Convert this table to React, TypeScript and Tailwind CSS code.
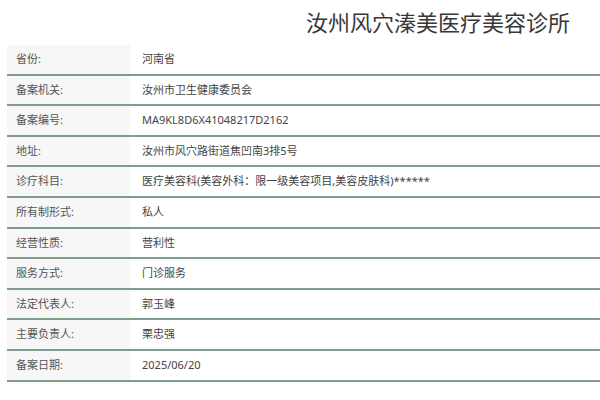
import React from "react";

const rows: [string, string][] = [
  ["省份:", "河南省"],
  ["备案机关:", "汝州市卫生健康委员会"],
  ["备案编号:", "MA9KL8D6X41048217D2162"],
  ["地址:", "汝州市风穴路街道焦凹南3排5号"],
  ["诊疗科目:", "医疗美容科(美容外科：限一级美容项目,美容皮肤科)******"],
  ["所有制形式:", "私人"],
  ["经营性质:", "营利性"],
  ["服务方式:", "门诊服务"],
  ["法定代表人:", "郭玉峰"],
  ["主要负责人:", "栗忠强"],
  ["备案日期:", "2025/06/20"],
];

export default function App() {
  return (
    <div
      className="w-[600px] h-[400px] bg-white overflow-hidden"
      style={{ fontFamily: '"Noto Sans", "Noto Sans CJK SC", sans-serif' }}
    >
      <div className="h-[45px] flex justify-end items-start pt-[7px] pr-[30px]">
        <h1 className="text-[22px] leading-[30px] text-[#383838] font-normal">汝州风穴溱美医疗美容诊所</h1>
      </div>
      <div className="ml-[7px]">
        {rows.map(([k, v]) => (
          <div key={k} className="flex h-[30.6px] border-b-2 border-[#7f9d8d]">
            <div className="w-[123px] shrink-0 bg-[#f7f7f7] pl-[9px] flex items-center text-[11px] text-[#555]">
              {k}
            </div>
            <div className="flex-1 pl-[12px] flex items-center text-[11px] text-[#444]">{v}</div>
          </div>
        ))}
      </div>
    </div>
  );
}
